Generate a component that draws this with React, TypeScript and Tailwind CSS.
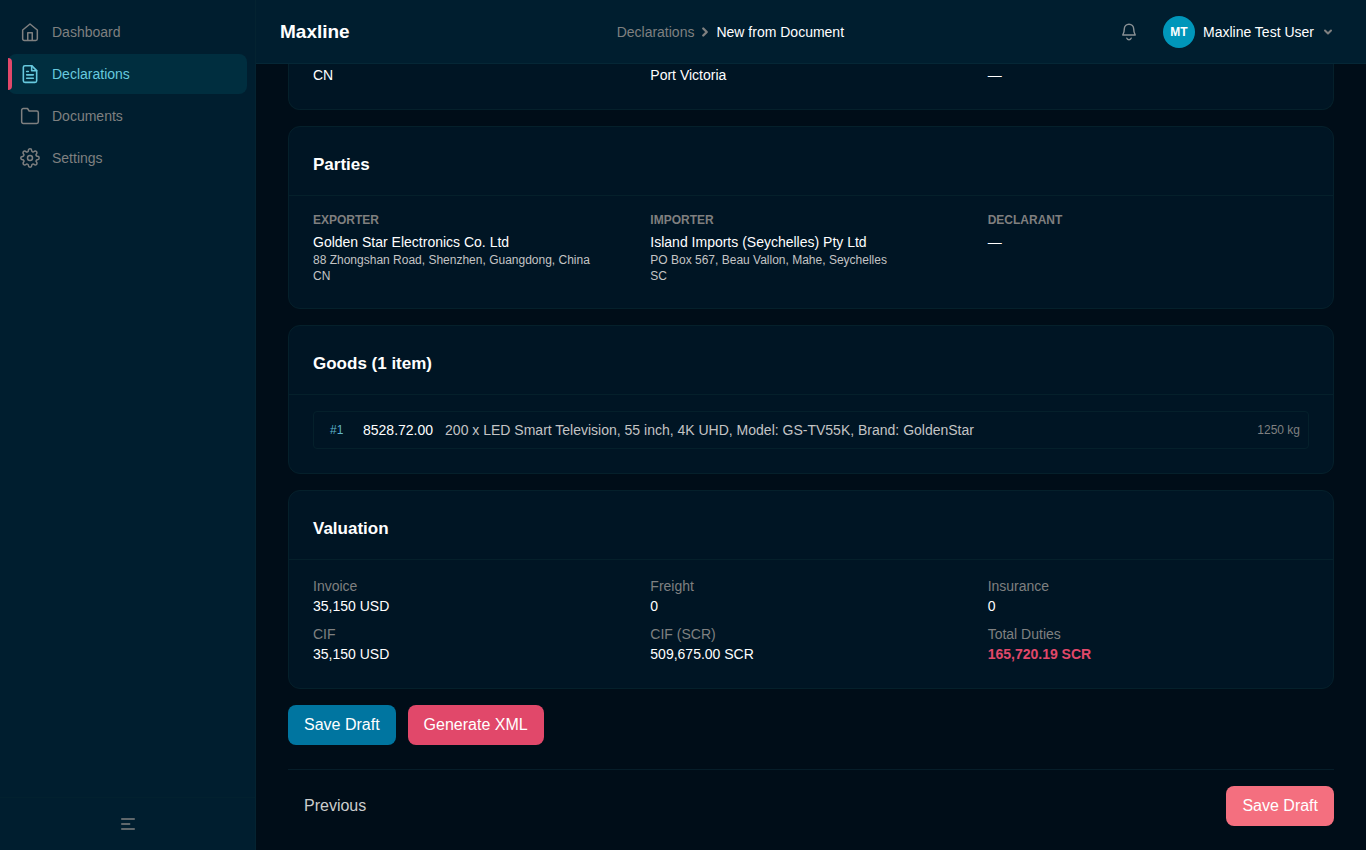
import type { ReactNode } from "react";
import { FiChevronDown, FiChevronRight, FiFileText, FiFolder, FiSettings } from "react-icons/fi";

type NavItem = { label: string; icon: ReactNode; active?: boolean };

function HomeIcon() {
  return (
    <svg width="20" height="20" viewBox="0 0 24 24" fill="none" stroke="currentColor" strokeWidth="1.8" strokeLinecap="round" strokeLinejoin="round">
      <path d="M3.2 9.6 12 2.4l8.8 7.2v10.6a2 2 0 0 1-2 2H5.2a2 2 0 0 1-2-2z" />
      <path d="M9.3 22v-9.2h5.4V22" />
    </svg>
  );
}

function BellIcon() {
  return (
    <svg width="20" height="20" viewBox="0 0 24 24" fill="none" stroke="currentColor" strokeWidth="1.7" strokeLinecap="round" strokeLinejoin="round">
      <path d="M6.4 8.2a5.6 5.6 0 0 1 11.2 0c0 3.2.6 5 1.9 7.4h-15c1.300-2.400 1.900-4.200 1.900-7.400z" />
      <path d="M9.400 19.400c.5 1.200 1.400 1.900 2.600 1.900s2.100-.7 2.600-1.900" />
    </svg>
  );
}

const navItems: NavItem[] = [
  { label: "Dashboard", icon: <HomeIcon /> },
  { label: "Declarations", icon: <FiFileText size={20} strokeWidth={1.9} />, active: true },
  { label: "Documents", icon: <FiFolder size={20} strokeWidth={1.8} /> },
  { label: "Settings", icon: <FiSettings size={20} strokeWidth={1.8} /> },
];

const parties = [
  {
    role: "Exporter",
    name: "Golden Star Electronics Co. Ltd",
    address: "88 Zhongshan Road, Shenzhen, Guangdong, China",
    country: "CN",
  },
  {
    role: "Importer",
    name: "Island Imports (Seychelles) Pty Ltd",
    address: "PO Box 567, Beau Vallon, Mahe, Seychelles",
    country: "SC",
  },
  { role: "Declarant", name: "—" },
];

const valuation = [
  { label: "Invoice", value: "35,150 USD" },
  { label: "Freight", value: "0" },
  { label: "Insurance", value: "0" },
  { label: "CIF", value: "35,150 USD" },
  { label: "CIF (SCR)", value: "509,675.00 SCR" },
  { label: "Total Duties", value: "165,720.19 SCR", total: true },
];

function Sidebar() {
  return (
    <aside className="flex w-64 shrink-0 flex-col border-r border-[#042331] bg-[#001e2f]">
      <nav className="flex flex-1 flex-col gap-0.5 px-2 pt-3">
        {navItems.map(({ label, icon, active }) => (
          <a
            key={label}
            href="#"
            aria-current={active ? "page" : undefined}
            className={
              active
                ? "relative flex h-10 items-center gap-3 rounded-lg bg-[#002e3f] px-3 text-sm text-[#67c9de]"
                : "flex h-10 items-center gap-3 rounded-lg px-3 text-sm text-[#7f8080]"
            }
          >
            {active && <span className="absolute top-1 left-0 h-8 w-1 rounded-r-sm bg-[#e1486a]" />}
            {icon}
            {label}
          </a>
        ))}
      </nav>
      <div className="flex h-[53px] items-center justify-center border-t border-[#02212f]">
        <button type="button" aria-label="Collapse sidebar" className="text-[#7f8080]">
          <svg width="20" height="20" viewBox="0 0 24 24" fill="none" stroke="currentColor" strokeWidth="1.8" strokeLinecap="round">
            <path d="M4.500 6h15M4.500 12h9.500M4.500 18h15" />
          </svg>
        </button>
      </div>
    </aside>
  );
}

function Header() {
  return (
    <header className="flex h-16 shrink-0 items-center justify-between border-b border-[#052736] bg-[#001e2f] px-6">
      <span className="text-[19px] leading-7 font-bold text-white">Maxline</span>
      <nav aria-label="Breadcrumb" className="flex items-center gap-1 text-sm">
        <a href="#" className="text-[#7f8080]">Declarations</a>
        <FiChevronRight size={14} strokeWidth={4} className="text-[#7f8080]" />
        <span className="text-white">New from Document</span>
      </nav>
      <div className="flex items-center gap-2">
        <button type="button" aria-label="Notifications" className="p-2 text-[#8a9195]">
          <BellIcon />
        </button>
        <button type="button" className="flex items-center gap-2 px-2 text-sm text-white">
          <span className="flex size-8 items-center justify-center rounded-full bg-[#0096ba] text-xs font-bold">MT</span>
          Maxline Test User
          <FiChevronDown size={12} strokeWidth={4} className="text-[#7f8080]" />
        </button>
      </div>
    </header>
  );
}

function Card({ title, children }: { title: string; children: ReactNode }) {
  return (
    <section className="rounded-xl border border-[#05202b] bg-[#001524]">
      <h2 className="border-b border-[#05202b] px-6 pt-6 pb-4 text-[17px] leading-7 font-bold text-white">{title}</h2>
      <div className="px-6 pt-4 pb-6">{children}</div>
    </section>
  );
}

export default function App() {
  return (
    <div className="flex min-h-screen bg-[#000d18] font-['Liberation_Sans',Arial,sans-serif]">
      <Sidebar />
      <div className="flex min-w-0 flex-1 flex-col">
        <Header />
        <main className="flex flex-col px-8">
          <div className="grid grid-cols-3 gap-x-4 rounded-b-xl border border-t-0 border-[#05202b] bg-[#001524] px-6 pt-px pb-6 text-sm text-white">
            <span>CN</span>
            <span>Port Victoria</span>
            <span>—</span>
          </div>

          <div className="mt-4 flex flex-col gap-4">
            <Card title="Parties">
              <div className="grid grid-cols-3 gap-x-4">
                {parties.map((party) => (
                  <div key={party.role}>
                    <h3 className="mb-1 text-xs font-bold text-[#7f7f7f] uppercase">{party.role}</h3>
                    <p className="text-sm text-white">{party.name}</p>
                    {party.address && <p className="text-xs text-[#c4c4c4]">{party.address}</p>}
                    {party.country && <p className="text-xs text-[#c4c4c4]">{party.country}</p>}
                  </div>
                ))}
              </div>
            </Card>

            <Card title="Goods (1 item)">
              <div className="flex items-center gap-3 rounded-sm border border-[#05202b] py-2 pr-2 pl-4 text-sm">
                <span className="w-[21px] text-xs text-[#5fb4ca]">#1</span>
                <span className="text-white">8528.72.00</span>
                <span className="flex-1 truncate text-[#c4c4c4]">
                  200 x LED Smart Television, 55 inch, 4K UHD, Model: GS-TV55K, Brand: GoldenStar
                </span>
                <span className="text-xs text-[#7f8080]">1250 kg</span>
              </div>
            </Card>

            <Card title="Valuation">
              <dl className="grid grid-cols-3 gap-x-4 gap-y-2 text-sm">
                {valuation.map((entry) => (
                  <div key={entry.label}>
                    <dt className="text-[#7f8080]">{entry.label}</dt>
                    <dd className={entry.total ? "font-bold text-[#e1486a]" : "text-white"}>{entry.value}</dd>
                  </div>
                ))}
              </dl>
            </Card>
          </div>

          <div className="mt-4 flex gap-3">
            <button type="button" className="h-10 rounded-lg bg-[#0075a0] px-4 text-base text-white">Save Draft</button>
            <button type="button" className="h-10 rounded-lg bg-[#e1486a] px-4 text-base text-white">Generate XML</button>
          </div>

          <div className="mt-6 flex items-start justify-between border-t border-[#061d29] pt-4 pb-5">
            <button type="button" className="h-10 px-4 text-base text-[#cdcdcd]">Previous</button>
            <button type="button" className="h-10 rounded-lg bg-[#f46f7f] px-4 text-base text-white">Save Draft</button>
          </div>
        </main>
      </div>
    </div>
  );
}
